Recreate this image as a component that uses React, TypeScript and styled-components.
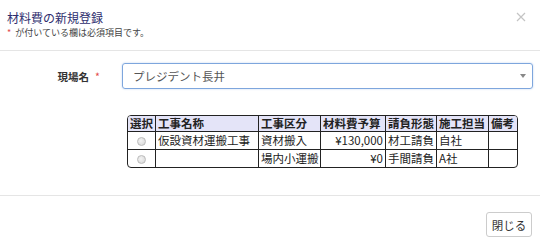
import React from 'react';
import styled, { createGlobalStyle } from 'styled-components';

interface Row {
  name: string;
  kind: string;
  budget: string;
  contract: string;
  owner: string;
  note: string;
}

const rows: Row[] = [
  { name: '仮設資材運搬工事', kind: '資材搬入', budget: '¥130,000', contract: '材工請負', owner: '自社', note: '' },
  { name: '', kind: '場内小運搬', budget: '¥0', contract: '手間請負', owner: 'A社', note: '' },
];

const columns = [
  { label: '選択', width: 28 },
  { label: '工事名称', width: 103 },
  { label: '工事区分', width: 62 },
  { label: '材料費予算', width: 65 },
  { label: '請負形態', width: 51 },
  { label: '施工担当', width: 52 },
  { label: '備考', width: 28 },
];

const GlobalStyle = createGlobalStyle`
  html, body {
    margin: 0;
    padding: 0;
    background: #fff;
  }
  body {
    font-family: "Noto Sans CJK JP", "Noto Sans", sans-serif;
    color: #333;
  }
`;

const Modal = styled.div`
  width: 540px;
  height: 245px;
  display: flex;
  flex-direction: column;
  background: #fff;
`;

const Header = styled.div`
  height: 51px;
  box-sizing: border-box;
  border-bottom: 1px solid #e5e5e5;
  padding: 8px 14px 0 7px;
  display: flex;
  justify-content: space-between;
  align-items: flex-start;
`;

const Title = styled.h4`
  margin: 0;
  font-size: 12px;
  font-weight: normal;
  line-height: 19px;
  color: #2e2e6e;
`;

const Note = styled.div`
  font-size: 9px;
  line-height: 12px;
  color: #444;
`;

const Star = styled.span`
  color: #e34b4b;
  margin-right: 4px;
`;

const CloseX = styled.button`
  border: none;
  background: none;
  padding: 0;
  margin-top: 4px;
  width: 10px;
  height: 10px;
  display: flex;
  cursor: pointer;
`;

const Body = styled.div`
  flex: 1;
  padding: 12px 7px 0 0;
  border-bottom: 1px solid #e5e5e5;
`;

const FormRow = styled.div`
  display: grid;
  grid-template-columns: 122px 1fr;
  align-items: center;
`;

const Label = styled.label`
  justify-self: end;
  padding-right: 22px;
  font-size: 10.5px;
  font-weight: bold;
  color: #333;
  display: flex;
  gap: 6px;
`;

const ReqStar = styled.span`
  color: #e34b4b;
  font-weight: normal;
`;

const Select = styled.div`
  height: 26px;
  box-sizing: border-box;
  border: 1px solid #7ea6dd;
  border-radius: 3px;
  box-shadow: 0 0 2px rgba(102, 150, 220, 0.45);
  display: flex;
  align-items: center;
  justify-content: space-between;
  padding: 0 6px 0 10px;
  font-size: 11.5px;
  color: #555;
`;

const Caret = styled.span`
  width: 0;
  height: 0;
  border-left: 3px solid transparent;
  border-right: 3px solid transparent;
  border-top: 4px solid #888;
`;

const TableWrap = styled.div`
  padding: 26px 0 0 127px;
`;

const Table = styled.table`
  border-collapse: separate;
  border-spacing: 0;
  border: 1px solid #222;
  border-radius: 4px;
  table-layout: fixed;
  width: 390px;
  font-size: 11.5px;
  color: #222;
`;

const Th = styled.th`
  background: #e4e4f8;
  font-weight: bold;
  text-align: left;
  padding: 0 2px;
  height: 15px;
  line-height: 15px;
  white-space: nowrap;
  border-right: 1px solid #222;
  border-bottom: 1px solid #222;
  &:last-child { border-right: none; }
  &:first-child { border-top-left-radius: 3px; }
  &:last-child { border-top-right-radius: 3px; }
`;

const Td = styled.td<{ $align?: string }>`
  text-align: ${(p) => p.$align || 'left'};
  padding: 0 2px;
  height: 17px;
  line-height: 17px;
  white-space: nowrap;
  border-right: 1px solid #222;
  border-bottom: 1px solid #222;
  &:last-child { border-right: none; }
  tr:last-child > & { border-bottom: none; }
`;

const Radio = styled.span`
  display: inline-block;
  width: 7px;
  height: 7px;
  border-radius: 50%;
  border: 1px solid #bbb;
  background: radial-gradient(circle at 40% 40%, #f4f4f4, #d4d4d4);
  vertical-align: middle;
`;

const Footer = styled.div`
  height: 49px;
  box-sizing: border-box;
  display: flex;
  justify-content: flex-end;
  align-items: flex-start;
  padding: 16px 8px 0 0;
`;

const Button = styled.button`
  width: 46px;
  height: 25px;
  border: 1px solid #ccc;
  border-radius: 3px;
  background: #fff;
  font-family: inherit;
  font-size: 11.5px;
  color: #333;
  padding: 0;
  cursor: pointer;
`;

export default function App() {
  return (
    <>
      <GlobalStyle />
      <Modal>
        <Header>
          <div>
            <Title>材料費の新規登録</Title>
            <Note>
              <Star>*</Star>が付いている欄は必須項目です。
            </Note>
          </div>
          <CloseX aria-label="close">
            <svg width="10" height="10" viewBox="0 0 10 10">
              <path d="M1 1 L9 9 M9 1 L1 9" stroke="#c4c4c4" strokeWidth="1.2" />
            </svg>
          </CloseX>
        </Header>
        <Body>
          <FormRow>
            <Label>
              現場名<ReqStar>*</ReqStar>
            </Label>
            <Select>
              <span>プレジデント長井</span>
              <Caret />
            </Select>
          </FormRow>
          <TableWrap>
            <Table>
              <colgroup>
                {columns.map((c) => (
                  <col key={c.label} style={{ width: c.width }} />
                ))}
              </colgroup>
              <thead>
                <tr>
                  {columns.map((c) => (
                    <Th key={c.label}>{c.label}</Th>
                  ))}
                </tr>
              </thead>
              <tbody>
                {rows.map((r, i) => (
                  <tr key={i}>
                    <Td $align="center">
                      <Radio />
                    </Td>
                    <Td>{r.name}</Td>
                    <Td>{r.kind}</Td>
                    <Td $align="right">{r.budget}</Td>
                    <Td>{r.contract}</Td>
                    <Td>{r.owner}</Td>
                    <Td>{r.note}</Td>
                  </tr>
                ))}
              </tbody>
            </Table>
          </TableWrap>
        </Body>
        <Footer>
          <Button>閉じる</Button>
        </Footer>
      </Modal>
    </>
  );
}
